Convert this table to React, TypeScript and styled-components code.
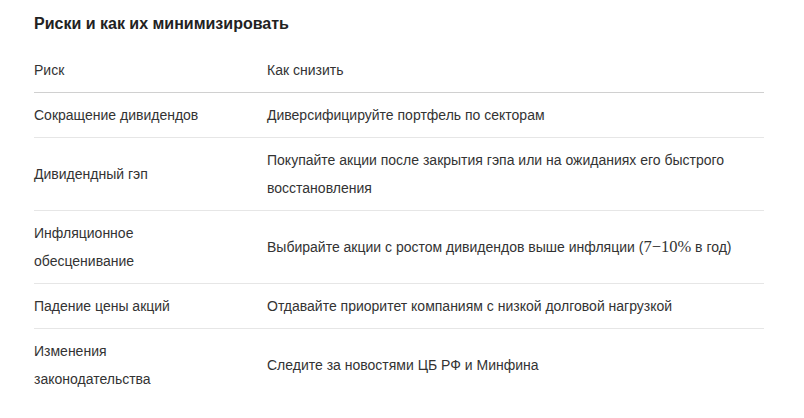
import React from 'react';
import styled, { createGlobalStyle } from 'styled-components';

const GlobalStyle = createGlobalStyle`
  body {
    margin: 0;
    background: #fff;
    font-family: "Liberation Sans", Arial, sans-serif;
    color: #333;
  }
`;

const Section = styled.section`
  padding: 12px 40px 0 34px;
`;

const Title = styled.h3`
  margin: 0 0 12px;
  font-size: 16px;
  line-height: 24px;
  font-weight: 700;
  color: #222;
`;

const Table = styled.table`
  width: 730px;
  border-collapse: collapse;
  font-size: 14px;
  line-height: 28px;
`;

const Row = styled.tr<{ $head?: boolean; $last?: boolean }>`
  border-bottom: ${(p) =>
    p.$last ? 'none' : `1px solid ${p.$head ? '#d0d0d0' : '#e6e6e6'}`};
`;

const Cell = styled.td<{ $first?: boolean }>`
  box-sizing: border-box;
  padding: 8px 0;
  text-align: left;
  font-weight: 400;
  vertical-align: middle;
  width: ${(p) => (p.$first ? '233px' : 'auto')};
`;

const Formula = styled.span`
  font-family: "Liberation Serif", "Times New Roman", serif;
  font-size: 16.5px;
`;

const rows: [React.ReactNode, React.ReactNode][] = [
  ['Сокращение дивидендов', 'Диверсифицируйте портфель по секторам'],
  ['Дивидендный гэп', 'Покупайте акции после закрытия гэпа или на ожиданиях его быстрого восстановления'],
  [
    <>Инфляционное<br />обесценивание</>,
    <>Выбирайте акции с ростом дивидендов выше инфляции (<Formula>7−10%</Formula> в год)</>,
  ],
  ['Падение цены акций', 'Отдавайте приоритет компаниям с низкой долговой нагрузкой'],
  [<>Изменения<br />законодательства</>, 'Следите за новостями ЦБ РФ и Минфина'],
];

export default function App() {
  return (
    <>
      <GlobalStyle />
      <Section>
        <Title>Риски и как их минимизировать</Title>
        <Table>
          <thead>
            <Row $head>
              <Cell as="th" $first>Риск</Cell>
              <Cell as="th">Как снизить</Cell>
            </Row>
          </thead>
          <tbody>
            {rows.map(([risk, fix], i) => (
              <Row key={i} $last={i === rows.length - 1}>
                <Cell $first>{risk}</Cell>
                <Cell>{fix}</Cell>
              </Row>
            ))}
          </tbody>
        </Table>
      </Section>
    </>
  );
}
